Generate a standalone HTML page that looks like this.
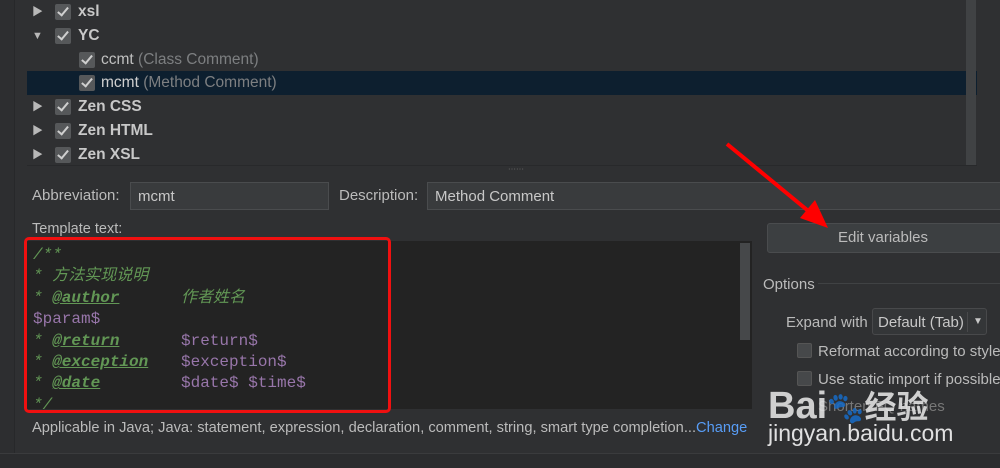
<!DOCTYPE html>
<html><head><meta charset="utf-8"><style>
*{margin:0;padding:0;box-sizing:border-box}
body{width:1000px;height:468px;background:#2f3032;position:relative;overflow:hidden;font-family:"Liberation Sans","Noto Sans CJK SC",sans-serif;color:#bbbbbb;font-size:15px}
.a{position:absolute;white-space:nowrap}
.gut{left:0;top:0;width:15px;height:453px;background:#2d2e30;border-right:1px solid #27282a}
.tree{left:27px;top:0;width:950px;height:166px;border-bottom:1px solid #28292b}
.row{position:absolute;left:0;height:24px;width:940px;line-height:24px;font-size:15.5px}
.tri{position:absolute;left:5px;font-size:11px;color:#b8b8b8}
.cb{position:absolute;width:16px;height:16px;background:#56585a;border-radius:2px;top:4px}
.cb:after{content:"";position:absolute;left:5px;top:1px;width:4px;height:9px;border:solid #cfcfcf;border-width:0 2px 2px 0;transform:rotate(40deg)}
.b{font-weight:bold;color:#c8c8c8}
.g{color:#7d7f81}
.mono{font-family:"Liberation Mono","Noto Sans CJK SC",monospace;font-size:16px}
.cm{color:#629755;font-style:italic}
.tag{color:#629755;font-style:italic;font-weight:bold;text-decoration:underline}
.pv{color:#9876aa}
.cb2{position:absolute;width:15px;height:15px;background:#46484a;border:1px solid #555;border-radius:2px}
</style></head><body>
<div class="a gut"></div>
<div class="a" style="left:0;top:453px;width:1000px;height:15px;background:#2b2c2e;border-top:1px solid #3a3b3d"></div>
<div class="a tree">
 <div class="row" style="top:0"><span class="tri">▶</span><span class="cb" style="left:28px"></span><span class="a b" style="left:51px">xsl</span></div>
 <div class="row" style="top:24px"><span class="tri">▼</span><span class="cb" style="left:28px"></span><span class="a b" style="left:51px">YC</span></div>
 <div class="row" style="top:48px"><span class="cb" style="left:52px"></span><span class="a" style="left:74px;color:#c0c0c0">ccmt <span class="g">(Class Comment)</span></span></div>
 <div class="row" style="top:71px;background:#0d1f2f;width:950px"><span class="cb" style="left:52px"></span><span class="a" style="left:74px;color:#d0d0d0">mcmt <span class="g">(Method Comment)</span></span></div>
 <div class="row" style="top:95px"><span class="tri">▶</span><span class="cb" style="left:28px"></span><span class="a b" style="left:51px">Zen CSS</span></div>
 <div class="row" style="top:119px"><span class="tri">▶</span><span class="cb" style="left:28px"></span><span class="a b" style="left:51px">Zen HTML</span></div>
 <div class="row" style="top:143px"><span class="tri">▶</span><span class="cb" style="left:28px"></span><span class="a b" style="left:51px">Zen XSL</span></div>
 <div class="a" style="left:939px;top:0;width:10px;height:165px;background:#404244"></div>
</div>
<div class="a" style="left:508px;top:164px;font-size:8px;color:#666">⋯⋯</div>
<div class="a" style="left:32px;top:187px">Abbreviation:</div>
<div class="a" style="left:130px;top:182px;width:199px;height:28px;background:#393b3d;border:1px solid #4a4c4e;padding:5px 7px;color:#c8c8c8">mcmt</div>
<div class="a" style="left:339px;top:187px">Description:</div>
<div class="a" style="left:427px;top:182px;width:580px;height:28px;background:#393b3d;border:1px solid #4a4c4e;padding:5px 7px;color:#c8c8c8">Method Comment</div>
<div class="a" style="left:32px;top:221px;font-size:14.5px">Template text:</div>
<div class="a" style="left:27px;top:241px;width:725px;height:168px;background:#232323"></div>
<div class="a" style="left:740px;top:243px;width:10px;height:97px;background:#46484a"></div>
<div class="a mono" style="left:33px;top:245px;line-height:21.4px">
<div class="cm">/**</div>
<div class="cm">* 方法实现说明</div>
<div><span class="cm">* </span><span class="tag">@author</span><span class="cm a" style="left:148px">作者姓名</span></div>
<div class="pv">$param$</div>
<div><span class="cm">* </span><span class="tag">@return</span><span class="pv a" style="left:148px">$return$</span></div>
<div><span class="cm">* </span><span class="tag">@exception</span><span class="pv a" style="left:148px">$exception$</span></div>
<div><span class="cm">* </span><span class="tag">@date</span><span class="pv a" style="left:148px">$date$ $time$</span></div>
<div class="cm">*/</div>
</div>
<div class="a" style="left:24px;top:237px;width:367px;height:176px;border:3px solid #f01010;border-radius:5px"></div>
<div class="a" style="left:32px;top:420px;font-size:14.65px">Applicable in Java; Java: statement, expression, declaration, comment, string, smart type completion...<span style="color:#589df6">Change</span></div>
<div class="a" style="left:767px;top:223px;width:240px;height:30px;background:#3c3f41;border:1px solid #4a4c4e;border-radius:3px;text-align:center;line-height:28px;padding-right:8px">Edit variables</div>
<div class="a" style="left:763px;top:276px">Options</div>
<div class="a" style="left:818px;top:283px;width:190px;height:1px;background:#404244"></div>
<div class="a" style="left:786px;top:314px">Expand with</div>
<div class="a" style="left:872px;top:308px;width:115px;height:27px;border:1px solid #48494b;border-radius:3px;background:#343638;padding:5px 5px;color:#c8c8c8">Default (Tab)<span class="a" style="left:94px;top:3px;width:1px;height:20px;background:#48494b"></span><span class="a" style="left:100px;top:7px;font-size:10px">▼</span></div>
<div class="cb2" style="left:797px;top:343px"></div>
<div class="a" style="left:818px;top:343px">Reformat according to style</div>
<div class="cb2" style="left:797px;top:371px"></div>
<div class="a" style="left:818px;top:371px">Use static import if possible</div>
<div class="a" style="left:818px;top:398px;color:#777">Shorten FQ names</div>
<div class="a" style="left:768px;top:382px;font-size:38px;font-weight:bold;color:rgba(235,235,235,.85)">Bai<span style="font-size:30px">🐾</span><span style="font-family:'Noto Sans CJK SC',sans-serif;font-size:32px">经验</span></div>
<div class="a" style="left:768px;top:420px;font-size:23px;color:rgba(240,240,240,.92)">jingyan.baidu.com</div>
<svg class="a" style="left:0;top:0" width="1000" height="468"><line x1="727" y1="144" x2="812" y2="214" stroke="#f00" stroke-width="4"/><polygon points="828,228 800,218 815,200" fill="#f00"/></svg>
</body></html>
